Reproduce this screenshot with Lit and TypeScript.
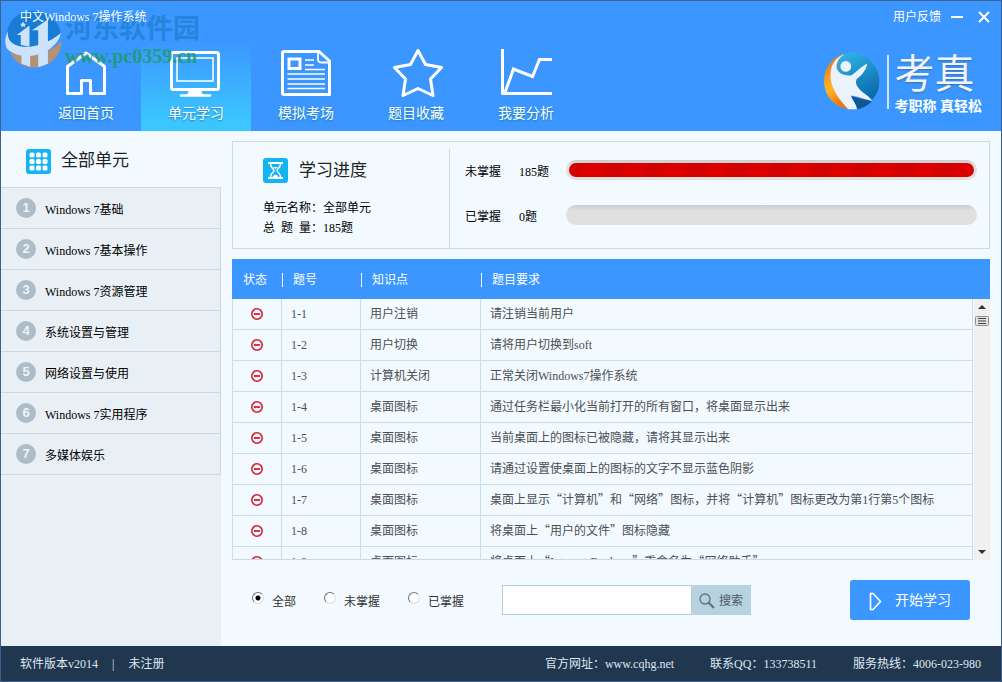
import { LitElement, html, svg, css, TemplateResult } from "lit";
import { customElement, property, state } from "lit/decorators.js";
import { classMap } from "lit/directives/class-map.js";

/** Sets curly quotes in the CJK face so that they take a full-width cell. */
const zh = (text: string) =>
  text
    .split(/([“”])/)
    .filter((part) => part !== "")
    .map((part) => (/[“”]/.test(part) ? html`<span class="quote">${part}</span>` : part));

const navItems: { label: string; icon: TemplateResult }[] = [
  {
    label: "返回首页",
    icon: html`<svg viewBox="59 48 54 50" width="54" height="50" fill="none" stroke="#fff" stroke-width="3">
      <path d="M67.500 66.500 L86 53 L104.500 66.500 V93.500 H90.500 V80.500 H81.500 V93.500 H67.500 Z" stroke-linejoin="round" />
    </svg>`,
  },
  {
    label: "单元学习",
    icon: html`<svg viewBox="169 48 54 50" width="54" height="50" fill="none" stroke="#fff">
      <rect x="171.500" y="52.500" width="47" height="37" rx="2" stroke-width="3" />
      <rect x="177" y="58" width="36" height="23" stroke-width="1.500" />
      <path d="M189 90 H201 L203 95 H187 Z" fill="#fff" stroke="none" />
      <path d="M181 95.500 H210" stroke-width="2.500" stroke-linecap="round" />
    </svg>`,
  },
  {
    label: "模拟考场",
    icon: html`<svg viewBox="279 48 54 50" width="54" height="50" fill="none" stroke="#fff">
      <path d="M284 51.500 H319 L329.500 61 V94.500 H284 Q282.500 94.500 282.500 93 V53 Q282.500 51.500 284 51.500 Z" stroke-width="3" stroke-linejoin="round" />
      <path d="M318 52 V59 Q318 62.500 321 62.500 H329" stroke-width="1.800" />
      <rect x="289" y="59" width="11" height="9.500" stroke-width="3" />
      <path d="M305 60 H314 M305 65 H314 M305 69.500 H325 M287.500 74 H325 M287.500 79 H325 M287.500 84 H325 M287.500 88.500 H325" stroke-width="1.600" />
    </svg>`,
  },
  {
    label: "题目收藏",
    icon: html`<svg viewBox="389 48 54 50" width="54" height="50" fill="none" stroke="#fff" stroke-width="3" stroke-linejoin="round">
      <path d="M418 50.500 L425.500 64.500 L441.500 67.500 L430.500 79 L433 95.500 L418 88.500 L403 95.500 L405.500 79 L394.500 67.500 L410.500 64.500 Z" />
    </svg>`,
  },
  {
    label: "我要分析",
    icon: html`<svg viewBox="499 48 54 50" width="54" height="50" fill="none" stroke="#fff" stroke-width="3">
      <path d="M502.500 49 V93.500 H552" stroke-linejoin="round" />
      <path d="M505 92.500 L513.500 69 L532.500 76.500 L539.500 59.500 H552" />
    </svg>`,
  },
];

const units = [
  "Windows 7基础",
  "Windows 7基本操作",
  "Windows 7资源管理",
  "系统设置与管理",
  "网络设置与使用",
  "Windows 7实用程序",
  "多媒体娱乐",
];

const questions = [
  { id: "1-1", topic: "用户注销", task: "请注销当前用户" },
  { id: "1-2", topic: "用户切换", task: "请将用户切换到soft" },
  { id: "1-3", topic: "计算机关闭", task: "正常关闭Windows7操作系统" },
  { id: "1-4", topic: "桌面图标", task: "通过任务栏最小化当前打开的所有窗口，将桌面显示出来" },
  { id: "1-5", topic: "桌面图标", task: "当前桌面上的图标已被隐藏，请将其显示出来" },
  { id: "1-6", topic: "桌面图标", task: "请通过设置使桌面上的图标的文字不显示蓝色阴影" },
  { id: "1-7", topic: "桌面图标", task: "桌面上显示“计算机”和“网络”图标，并将“计算机”图标更改为第1行第5个图标" },
  { id: "1-8", topic: "桌面图标", task: "将桌面上“用户的文件”图标隐藏" },
  { id: "1-9", topic: "桌面图标", task: "将桌面上“Internet Explorer”重命名为“网络助手”" },
];

const base = css`
  * {
    box-sizing: border-box;
  }
  .quote {
    font-family: "Noto Sans CJK SC", sans-serif;
  }
  button {
    font: inherit;
    color: inherit;
    border: 0;
    padding: 0;
    background: none;
    cursor: pointer;
  }
  a {
    color: inherit;
    text-decoration: none;
  }
  svg {
    display: block;
    flex: none;
  }
`;

@customElement("app-header")
export class AppHeader extends LitElement {
  @state() active = 1;

  static styles = [
    base,
    css`
      :host {
        display: block;
        position: relative;
        flex: none;
        background: #3b97ff;
        color: #fff;
      }
      .titlebar {
        display: flex;
        align-items: flex-start;
        height: 41px;
        padding: 5px 10px 0 19px;
        line-height: 22px;
      }
      .title {
        flex: 1;
        position: relative;
        z-index: 1;
      }
      .minimize,
      .close {
        display: grid;
        place-items: center;
        height: 22px;
        width: 14px;
      }
      .minimize {
        margin: 0 13px 0 9px;
      }
      .row {
        display: flex;
        justify-content: space-between;
        height: 89px;
        padding: 0 19px 0 30px;
      }
      nav {
        display: flex;
      }
      .tab {
        display: flex;
        flex-direction: column;
        align-items: center;
        width: 110px;
        padding-top: 6px;
        font-size: 14px;
        line-height: 20px;
        gap: 6px;
        text-shadow: 0 1px 2px #1b7cae;
      }
      .tab.active {
        background: linear-gradient(#3b97ff, #3cc6ff 90%);
      }
      .brand {
        display: flex;
        gap: 6px;
        padding-top: 10px;
      }
      .rule {
        width: 2px;
        height: 54px;
        margin-top: 3px;
        background: #cfe5fb;
      }
      .name {
        font-size: 40px;
        line-height: 46px;
        color: #f1f5fa;
        text-shadow: 0 1px 2px #3a6fae;
      }
      .slogan {
        font-size: 14px;
        line-height: 18px;
        font-weight: 700;
      }
      .mark {
        position: absolute;
        left: 4px;
        top: 9px;
        display: flex;
        gap: 3px;
        pointer-events: none;
      }
      .mark-logo {
        opacity: 0.85;
      }
      .mark-name {
        font-size: 27px;
        line-height: 34px;
        font-weight: 700;
        color: #1d7ccd;
        opacity: 0.7;
        padding-top: 2px;
      }
      .mark-site {
        font-size: 20px;
        line-height: 20px;
        font-weight: 700;
        color: #1f9a6c;
        opacity: 0.85;
      }
    `,
  ];

  render() {
    return html`
      <div class="titlebar">
        <span class="title">中文Windows 7操作系统</span>
        <a href="#feedback">用户反馈</a>
        <button class="minimize" aria-label="最小化">
          <svg width="12" height="12" viewBox="0 0 12 12"><path d="M0 6 H12" stroke="#fff" stroke-width="2" /></svg>
        </button>
        <button class="close" aria-label="关闭">
          <svg width="12" height="12" viewBox="0 0 12 12"><path d="M1 1 L11 11 M11 1 L1 11" stroke="#fff" stroke-width="2" /></svg>
        </button>
      </div>
      <div class="row">
        <nav>
          ${navItems.map(
            (item, i) => html`<a
              href="#"
              class=${classMap({ tab: true, active: i === this.active })}
              @click=${(e: Event) => {
                e.preventDefault();
                this.active = i;
              }}
              >${item.icon}<span>${item.label}</span></a
            >`
          )}
        </nav>
        <div class="brand">
          <svg width="58" height="58" viewBox="130 156 173 173">
            <defs>
              <linearGradient id="orange" x1="0" y1="0" x2="0.3" y2="1">
                <stop offset="0" stop-color="#e8641c" />
                <stop offset="0.65" stop-color="#ffb81e" />
                <stop offset="1" stop-color="#ee7410" />
              </linearGradient>
              <linearGradient id="blue" x1="0" y1="0" x2="0.4" y2="1">
                <stop offset="0" stop-color="#35b8e8" />
                <stop offset="1" stop-color="#0c6cad" />
              </linearGradient>
            </defs>
            <path d="M190 162 C110 190 112 315 212 327 L190 240 Z" fill="url(#orange)" />
            <path d="M178 170 C235 135 300 185 298 247 C297 275 285 290 272 304 L205 270 L170 205 Z" fill="url(#blue)" />
            <path d="M214 288 L276 303 C262 318 245 325 231 327 Z" fill="#0f5793" />
            <path
              d="M196 161 C146 178 146 232 162 266 C174 294 196 316 206 327 L231 327 C231 311 216 299 213 286 C235 289 260 299 277 302 C272 290 246 276 238 266 C228 254 226 246 231 236 C247 225 259 208 262 192 C247 195 234 214 214 226 C190 227 172 218 170 200 C170 183 181 170 196 161 Z"
              fill="#eaf3fb"
            />
            <circle cx="198" cy="199" r="16" fill="#eaf3fb" />
          </svg>
          <div class="rule"></div>
          <div>
            <div class="name">考真</div>
            <div class="slogan">考职称 真轻松</div>
          </div>
        </div>
      </div>
      <div class="mark" aria-hidden="true">
        <svg class="mark-logo" width="57" height="58" viewBox="15 30 170 172">
          <path d="M22 126 C12 70 50 32 98 32 C146 32 178 66 182 104 C150 145 90 155 22 126 Z" fill="#1479cf" />
          <path d="M30 156 C80 178 150 158 184 122 C182 170 145 201 100 201 C66 201 42 182 30 156 Z" fill="#c9905f" />
          <path d="M90 160 H64 V190 L90 199 Z M143 146 L114 156 V200 L143 190 Z" fill="#e5f1fc" />
          <path d="M62 134 V104 H50 L88 76 V138 Z M114 138 V90 H96 L143 58 V128 Z" fill="#e5f1fc" />
          <path d="M24 92 C14 150 110 158 182 98 C168 164 62 188 22 146 C12 130 16 108 24 92 Z" fill="#e5f1fc" />
          <path d="M69 64 l3 6 6 1 -4 4 1 6 -6 -3 -6 3 1 -6 -4 -4 6 -1 Z" fill="#e5f1fc" />
        </svg>
        <div>
          <div class="mark-name">河东软件园</div>
          <div class="mark-site">www.pc0359.cn</div>
        </div>
      </div>
    `;
  }
}

@customElement("unit-list")
export class UnitList extends LitElement {
  static styles = [
    base,
    css`
      :host {
        display: block;
        flex: none;
        width: 220px;
        background: #e8f0f6;
        color: #000;
      }
      .heading {
        display: flex;
        align-items: center;
        gap: 10px;
        height: 56px;
        padding: 4px 0 0 25px;
        margin: 0;
        font-size: 17px;
        font-weight: 400;
        line-height: 24px;
        color: #222;
        background: #f2faff;
      }
      ul {
        list-style: none;
        margin: 0;
        padding: 0;
        border: solid #cbd9e4;
        border-width: 1px 1px 0 0;
      }
      .unit {
        display: flex;
        align-items: center;
        gap: 9px;
        height: 41px;
        padding-left: 15px;
        border-bottom: 1px solid #cbd9e4;
      }
      .number {
        display: grid;
        place-items: center;
        width: 20px;
        height: 20px;
        border-radius: 50%;
        background: #adbcc6;
        color: #eef4f9;
        font: 700 13px/20px "Liberation Sans", sans-serif;
      }
      .unit a {
        line-height: 20px;
        padding-top: 4px;
      }
    `,
  ];

  render() {
    return html`
      <h2 class="heading">
        <svg width="25" height="25" viewBox="0 0 25 25">
          <rect width="25" height="25" rx="3" fill="#14b4f2" />
          ${[6, 12.5, 19].map((y) => [6, 12.5, 19].map((x) => svg`<rect x=${x - 2.5} y=${y - 2.5} width="5" height="5" rx="1.500" fill="#fff" />`))}
        </svg>
        全部单元
      </h2>
      <ul>
        ${units.map((unit, i) => html`<li class="unit"><span class="number">${i + 1}</span><a href="#unit">${unit}</a></li>`)}
      </ul>
    `;
  }
}

@customElement("progress-track")
export class ProgressTrack extends LitElement {
  @property({ type: Number }) value = 0;
  @property() label = "";

  static styles = css`
    :host {
      display: block;
      flex: 1;
    }
    .track {
      box-sizing: border-box;
      height: 20px;
      padding: 3px;
      border-radius: 10px;
      background: linear-gradient(#c8cdd0, #e0e0e0 30%);
    }
    .fill {
      height: 14px;
      border-radius: 7px;
      background: repeating-linear-gradient(120deg, #d20000 0 12px, #de0000 18px 30px, #d20000 36px);
    }
  `;

  render() {
    return html`<div class="track" role="progressbar" aria-label=${this.label} aria-valuenow=${this.value}>
      <div class="fill" style="width:${this.value}%"></div>
    </div>`;
  }
}

@customElement("study-progress")
export class StudyProgress extends LitElement {
  static styles = [
    base,
    css`
      :host {
        display: flex;
        flex: none;
        height: 108px;
        padding-top: 7px;
        border: 1px solid #cbdbe6;
        color: #000;
      }
      .summary {
        width: 217px;
        padding: 9px 0 0 30px;
        border-right: 1px solid #cbdbe6;
      }
      .heading {
        display: flex;
        align-items: center;
        gap: 11px;
        margin: 0 0 15px;
        font-size: 17px;
        font-weight: 400;
        line-height: 25px;
        color: #222;
      }
      .facts {
        margin: 0;
        line-height: 20px;
      }
      .fact {
        display: flex;
      }
      .fact dt {
        width: 48px;
        text-align: justify;
        text-align-last: justify;
      }
      .fact dd {
        margin: 0;
      }
      .bars {
        flex: 1;
        display: flex;
        flex-direction: column;
        gap: 25px;
        padding: 11px 12px 0 15px;
      }
      .bar {
        display: flex;
        height: 20px;
        line-height: 24px;
      }
      .name {
        width: 54px;
      }
      .count {
        width: 47px;
      }
    `,
  ];

  render() {
    return html`
      <section class="summary">
        <h2 class="heading">
          <svg width="25" height="25" viewBox="0 0 25 25" fill="none" stroke="#fff">
            <rect width="25" height="25" rx="3" fill="#14b4f2" stroke="none" />
            <path d="M5 5 H20 M5 20 H20" stroke-width="2" />
            <path d="M7.500 6 C7.500 10 11 11 11 12.500 C11 14 7.500 15 7.500 19 M17.500 6 C17.500 10 14 11 14 12.500 C14 14 17.500 15 17.500 19" stroke-width="1.500" />
            <path d="M9.500 19 Q12.500 14 15.500 19 Z M10 9 H15 L12.500 11 Z" fill="#fff" stroke="none" />
          </svg>
          学习进度
        </h2>
        <dl class="facts">
          <div class="fact"><dt>单元名称</dt><dd>：全部单元</dd></div>
          <div class="fact"><dt>总 题 量</dt><dd>：185题</dd></div>
        </dl>
      </section>
      <section class="bars">
        <div class="bar">
          <span class="name">未掌握</span><span class="count">185题</span><progress-track label="未掌握" value="100"></progress-track>
        </div>
        <div class="bar">
          <span class="name">已掌握</span><span class="count">0题</span><progress-track label="已掌握" value="0"></progress-track>
        </div>
      </section>
    `;
  }
}

@customElement("question-table")
export class QuestionTable extends LitElement {
  static styles = [
    base,
    css`
      :host {
        display: flex;
        flex: 1;
        min-height: 0;
        background: linear-gradient(#3b97ff 40px, transparent 40px);
      }
      .view {
        flex: 1;
        overflow: hidden;
        border-bottom: 1px solid #c4dbe8;
      }
      table {
        width: 100%;
        table-layout: fixed;
        border-collapse: separate;
        border-spacing: 0;
        color: #4a4f54;
      }
      .state {
        width: 50px;
      }
      .id {
        width: 79px;
      }
      .topic {
        width: 120px;
      }
      th {
        height: 40px;
        padding: 2px 0 0;
        color: #fff;
        font-weight: 400;
        text-align: left;
        line-height: 20px;
      }
      .state-head {
        padding-left: 11px;
      }
      .head {
        display: flex;
        align-items: center;
        gap: 10px;
      }
      .head::before {
        content: "";
        width: 1px;
        height: 14px;
        background: #fff;
      }
      td {
        height: 31px;
        padding: 0 0 1px 9px;
        border: solid #cbdde8;
        border-width: 0 1px 1px 0;
        line-height: 20px;
        white-space: nowrap;
      }
      td:first-child {
        padding: 0 0 0 18px;
        border-left-width: 1px;
      }
      .scroll {
        display: flex;
        flex-direction: column;
        width: 16px;
        margin: 40px 0 0 1px;
        background: #f0f0f0;
      }
      .arrow {
        display: grid;
        place-items: center;
        height: 16px;
      }
      .thumb {
        flex: 1;
      }
    `,
  ];

  render() {
    return html`
      <div class="view">
        <table>
          <colgroup>
            <col class="state" />
            <col class="id" />
            <col class="topic" />
            <col />
          </colgroup>
          <thead>
            <tr>
              <th class="state-head">状态</th>
              <th><span class="head">题号</span></th>
              <th><span class="head">知识点</span></th>
              <th><span class="head">题目要求</span></th>
            </tr>
          </thead>
          <tbody>
            ${questions.map(
              (q) => html`<tr>
                <td>
                  <svg width="12" height="12" viewBox="0 0 12 12" role="img" aria-label="未掌握">
                    <circle cx="6" cy="6" r="5.200" fill="none" stroke="#d82034" stroke-width="1.600" />
                    <path d="M3 6 H9" stroke="#d82034" stroke-width="1.800" />
                  </svg>
                </td>
                <td>${q.id}</td>
                <td>${q.topic}</td>
                <td>${zh(q.task)}</td>
              </tr>`
            )}
          </tbody>
        </table>
      </div>
      <div class="scroll">
        <button class="arrow" aria-label="向上滚动">
          <svg width="8" height="4" viewBox="0 0 8 4"><path d="M0 4 L4 0 L8 4 Z" fill="#333" /></svg>
        </button>
        <div class="thumb">
          <svg width="16" height="12" viewBox="0 0 16 12">
            <rect x="1.500" y="1.500" width="13" height="9" rx="1" fill="#e2e2e2" stroke="#909090" />
            <path d="M4 3.500 H12 M4 6 H12 M4 8.500 H12" stroke="#444" />
          </svg>
        </div>
        <button class="arrow" aria-label="向下滚动">
          <svg width="8" height="4" viewBox="0 0 8 4"><path d="M0 0 L4 4 L8 0 Z" fill="#333" /></svg>
        </button>
      </div>
    `;
  }
}

@customElement("action-bar")
export class ActionBar extends LitElement {
  static styles = [
    base,
    css`
      :host {
        display: flex;
        align-items: center;
        flex: none;
        height: 86px;
        padding: 0 20px 6px 20px;
        color: #333;
      }
      .filters {
        display: flex;
        gap: 28px;
        margin: 0;
        padding: 0;
        border: 0;
        width: 250px;
      }
      .filter {
        display: flex;
        align-items: flex-start;
        gap: 8px;
        line-height: 20px;
        padding-top: 3px;
      }
      input[type="radio"] {
        appearance: none;
        width: 12px;
        height: 12px;
        margin: 0;
        border: 1px solid #ddd;
        border-top-color: #707070;
        border-left-color: #707070;
        border-radius: 50%;
        background: #fff;
      }
      input[type="radio"]:checked {
        background: radial-gradient(circle, #000 2px, #fff 3px);
      }
      .search {
        display: flex;
        width: 249px;
        height: 30px;
      }
      .query {
        flex: 1;
        min-width: 0;
        padding: 0 8px;
        border: 1px solid #b5ceda;
        border-right: 0;
        border-radius: 0;
        outline: 0;
        background: #fff;
        font: inherit;
      }
      .find {
        display: flex;
        align-items: center;
        justify-content: center;
        gap: 3px;
        width: 60px;
        background: #b6d2df;
        color: #4b5a64;
        padding-top: 2px;
      }
      .start {
        display: flex;
        align-items: center;
        justify-content: center;
        gap: 13px;
        width: 120px;
        height: 40px;
        margin-left: auto;
        border-radius: 3px;
        background: #3b97ff;
        color: #fff;
        font-size: 14px;
        padding-top: 2px;
      }
    `,
  ];

  render() {
    return html`
      <fieldset class="filters" aria-label="筛选">
        ${["全部", "未掌握", "已掌握"].map(
          (name, i) => html`<label class="filter"><input type="radio" name="filter" .checked=${i === 0} />${name}</label>`
        )}
      </fieldset>
      <form class="search" @submit=${(e: Event) => e.preventDefault()}>
        <input class="query" type="text" aria-label="搜索题目" />
        <button class="find">
          <svg width="17" height="17" viewBox="0 0 17 17" fill="none" stroke="#5b7480">
            <circle cx="6" cy="6" r="5" stroke-width="1.300" />
            <path d="M9.500 9.500 L15 15" stroke-width="2.200" />
          </svg>
          搜索
        </button>
      </form>
      <button class="start">
        <svg width="13" height="19" viewBox="0 0 13 19"><path d="M1.500 1.500 H4 L11.500 9.500 L4 17.500 H1.500 Z" fill="none" stroke="#fff" stroke-width="1.600" /></svg>
        开始学习
      </button>
    `;
  }
}

@customElement("app-root")
export class AppRoot extends LitElement {
  static styles = [
    base,
    css`
      :host {
        display: flex;
        flex-direction: column;
        height: 100vh;
        min-height: 560px;
        border: 1px solid #3d5f8e;
        background: #f2faff;
        font: 12px/20px "Liberation Serif", "Noto Sans CJK SC", sans-serif;
        box-sizing: border-box;
      }
      .body {
        display: flex;
        flex: 1;
        min-height: 0;
      }
      main {
        display: flex;
        flex-direction: column;
        flex: 1;
        min-width: 0;
        padding: 10px 11px 0;
      }
      study-progress {
        margin-bottom: 10px;
      }
      footer {
        display: flex;
        align-items: center;
        flex: none;
        gap: 36px;
        height: 35px;
        padding: 0 20px 0 19px;
        background: #21364f;
        color: #dfe8f0;
      }
      .version {
        display: flex;
        gap: 14px;
        flex: 1;
      }
    `,
  ];

  render() {
    return html`
      <app-header></app-header>
      <div class="body">
        <unit-list></unit-list>
        <main>
          <study-progress></study-progress>
          <question-table></question-table>
          <action-bar></action-bar>
        </main>
      </div>
      <footer>
        <span class="version"><span>软件版本v2014</span><span>|</span><span>未注册</span></span>
        <span>官方网址：<a href="#site">www.cqhg.net</a></span>
        <span>联系QQ：133738511</span>
        <span>服务热线：4006-023-980</span>
      </footer>
    `;
  }
}
